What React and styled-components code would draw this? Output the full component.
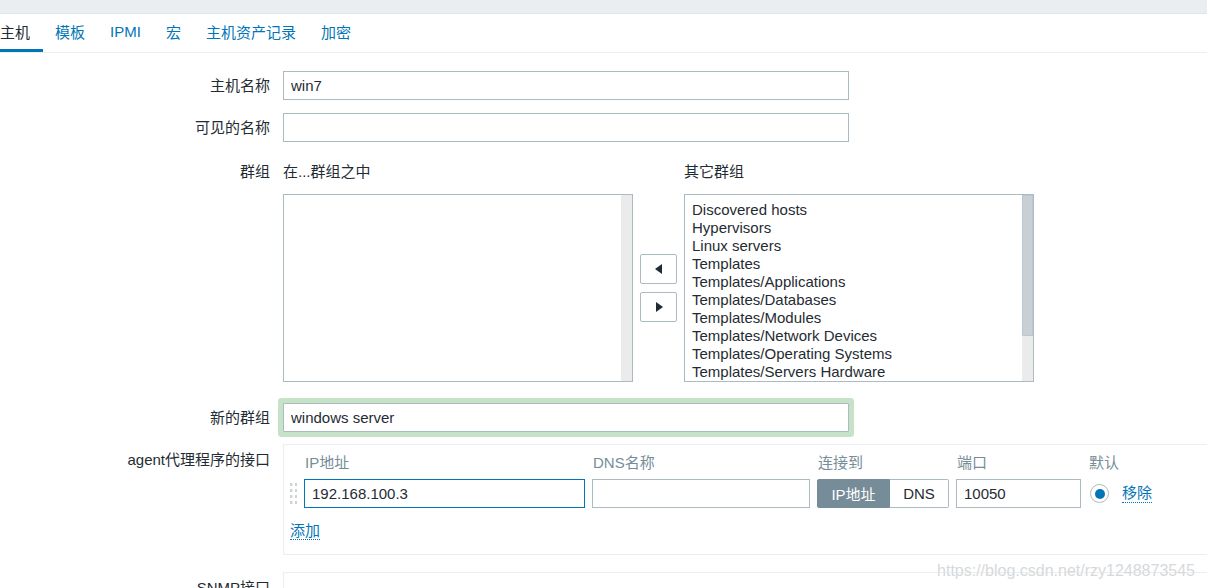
import React from "react";
import styled, { createGlobalStyle } from "styled-components";

const GlobalStyle = createGlobalStyle`
  html, body {
    margin: 0;
    padding: 0;
    overflow: hidden;
    background: #ffffff;
  }
  body {
    font-family: "Liberation Sans", Arial, "Noto Sans CJK SC", sans-serif;
    font-size: 15px;
    color: #1f2c33;
  }
`;

const tabs = ["主机", "模板", "IPMI", "宏", "主机资产记录", "加密"];

const otherGroups = [
  "Discovered hosts",
  "Hypervisors",
  "Linux servers",
  "Templates",
  "Templates/Applications",
  "Templates/Databases",
  "Templates/Modules",
  "Templates/Network Devices",
  "Templates/Operating Systems",
  "Templates/Servers Hardware",
];

function App() {
  return (
    <Page>
      <GlobalStyle />
      <TopBar />
      <TabBar>
        {tabs.map((t, i) => (
          <Tab key={t} active={i === 0}>
            {t}
          </Tab>
        ))}
      </TabBar>

      <Form>
        <Row>
          <Label>主机名称</Label>
          <Field>
            <TextInput wide defaultValue="win7" />
          </Field>
        </Row>
        <Row>
          <Label>可见的名称</Label>
          <Field>
            <TextInput wide defaultValue="" />
          </Field>
        </Row>
        <Row extraBottom={8}>
          <Label top={8}>群组</Label>
          <Field>
            <GroupGrid>
              <GroupHead>在...群组之中</GroupHead>
              <span />
              <GroupHead>其它群组</GroupHead>
              <Listbox>
                <ListItems />
                <Track />
              </Listbox>
              <MoveButtons>
                <MoveButton>
                  <Arrow viewBox="0 0 8 10">
                    <path d="M7 0 L7 10 L0 5 Z" />
                  </Arrow>
                </MoveButton>
                <MoveButton>
                  <Arrow viewBox="0 0 8 10">
                    <path d="M1 0 L1 10 L8 5 Z" />
                  </Arrow>
                </MoveButton>
              </MoveButtons>
              <Listbox>
                <ListItems>
                  {otherGroups.map((g) => (
                    <ListItem key={g}>{g}</ListItem>
                  ))}
                </ListItems>
                <Track>
                  <Thumb />
                </Track>
              </Listbox>
            </GroupGrid>
          </Field>
        </Row>
        <Row>
          <Label>新的群组</Label>
          <Field>
            <TextInput wide highlight defaultValue="windows server" />
          </Field>
        </Row>
        <Row extraBottom={4} pull={1}>
          <Label top={7}>agent代理程序的接口</Label>
          <Field>
            <InterfaceBox>
              <InterfaceGrid>
                <span />
                <ColHead>IP地址</ColHead>
                <ColHead>DNS名称</ColHead>
                <ColHead>连接到</ColHead>
                <ColHead>端口</ColHead>
                <ColHead>默认</ColHead>

                <Handle viewBox="0 0 7 24">
                  {[0, 1, 2, 3].map((r) =>
                    [0, 1].map((c) => (
                      <rect key={`${r}-${c}`} x={c * 5} y={1 + r * 6} width="2.4" height="3" />
                    ))
                  )}
                </Handle>
                <TextInput focused defaultValue="192.168.100.3" />
                <TextInput defaultValue="" />
                <Segmented>
                  <SegButton active>IP地址</SegButton>
                  <SegButton>DNS</SegButton>
                </Segmented>
                <TextInput defaultValue="10050" />
                <DefaultCell>
                  <Radio />
                  <DottedLink>移除</DottedLink>
                </DefaultCell>
              </InterfaceGrid>
              <AddRow>
                <DottedLink>添加</DottedLink>
              </AddRow>
            </InterfaceBox>
          </Field>
        </Row>
        <Row>
          <Label top={7}>SNMP接口</Label>
          <Field>
            <InterfaceBox tall />
          </Field>
        </Row>
      </Form>
      <Watermark>https://blog.csdn.net/rzy1248873545</Watermark>
    </Page>
  );
}

export default App;

const Page = styled.div`
  position: relative;
  width: 1207px;
  height: 588px;
  overflow: hidden;
`;

const TopBar = styled.div`
  height: 13px;
  background: #ebeef0;
  border-bottom: 1px solid #dfe4e7;
`;

const TabBar = styled.nav`
  display: flex;
  height: 38px;
  margin-left: -12.5px;
  border-bottom: 1px solid #ebeef0;
`;

const Tab = styled.div`
  display: flex;
  align-items: center;
  padding: 0 12.5px;
  color: ${(p) => (p.active ? "#1f2c33" : "#0275b8")};
  border-bottom: 3px solid ${(p) => (p.active ? "#0275b8" : "transparent")};
  white-space: nowrap;
`;

const Form = styled.div`
  display: flex;
  flex-direction: column;
  gap: 13px;
  padding-top: 18px;
`;

const Row = styled.div`
  display: flex;
  align-items: flex-start;
  margin-top: ${(p) => -(p.pull || 0)}px;
  padding-bottom: ${(p) => p.extraBottom || 0}px;
`;

const Label = styled.div`
  width: 270px;
  flex: none;
  text-align: right;
  line-height: 18px;
  padding-top: ${(p) => (p.top !== undefined ? p.top : 5.5)}px;
  white-space: nowrap;
`;

const Field = styled.div`
  margin-left: 13px;
  flex: 1;
`;

const TextInput = styled.input`
  box-sizing: border-box;
  width: ${(p) => (p.wide ? "566px" : "100%")};
  height: 29px;
  padding: 0 7px;
  font: inherit;
  color: #1f2c33;
  background: #ffffff;
  border: 1px solid ${(p) => (p.focused ? "#0275b8" : "#acbbc2")};
  border-radius: ${(p) => (p.highlight ? "1px" : "0")};
  outline: none;
  box-shadow: ${(p) => (p.highlight ? "0 0 0 5px #c6e2c7" : "none")};
`;

const GroupGrid = styled.div`
  display: grid;
  grid-template-columns: 350px 51px 350px;
  grid-template-rows: auto 188px;
  align-items: start;
`;

const GroupHead = styled.div`
  line-height: 18px;
  padding-top: 8px;
  margin-bottom: 13px;
  white-space: nowrap;
`;

const Listbox = styled.div`
  box-sizing: border-box;
  height: 188px;
  display: flex;
  border: 1px solid #acbbc2;
  overflow: hidden;
`;

const ListItems = styled.div`
  flex: 1;
  padding: 6px 7px 0;
  overflow: hidden;
`;

const ListItem = styled.div`
  line-height: 18px;
  white-space: nowrap;
`;

const Track = styled.div`
  width: 11px;
  flex: none;
  background: #ebebeb;
`;

const Thumb = styled.div`
  box-sizing: border-box;
  height: 141px;
  background: #c8d0d6;
  border: 1px solid #bdc7ce;
`;

const MoveButtons = styled.div`
  height: 188px;
  display: flex;
  flex-direction: column;
  justify-content: center;
  align-items: center;
  gap: 8px;
`;

const MoveButton = styled.div`
  box-sizing: border-box;
  width: 37px;
  height: 30px;
  display: flex;
  align-items: center;
  justify-content: center;
  border: 1px solid #acbbc2;
  border-radius: 2px;
  background: #ffffff;
`;

const Arrow = styled.svg`
  width: 8px;
  height: 10px;
  fill: #1f2c33;
`;

const InterfaceBox = styled.div`
  box-sizing: border-box;
  width: 1000px;
  height: ${(p) => (p.tall ? "120px" : "auto")};
  border: 1px solid #ebeef0;
  padding: 9px 6px 14px;
`;

const InterfaceGrid = styled.div`
  display: grid;
  grid-template-columns: 7px 281px 218px 132px 125px auto;
  column-gap: 7px;
  row-gap: 7px;
  align-items: center;
`;

const ColHead = styled.div`
  color: #768d99;
  line-height: 18px;
  padding-left: 1px;
  white-space: nowrap;
`;

const Handle = styled.svg`
  width: 7px;
  height: 24px;
  fill: #cdd4d8;
`;

const Segmented = styled.div`
  display: flex;
  height: 29px;
`;

const SegButton = styled.div`
  box-sizing: border-box;
  flex: ${(p) => (p.active ? "0 0 73px" : "1")};
  display: flex;
  align-items: center;
  justify-content: center;
  background: ${(p) => (p.active ? "#768d99" : "#ffffff")};
  color: ${(p) => (p.active ? "#ffffff" : "#1f2c33")};
  border: 1px solid ${(p) => (p.active ? "#768d99" : "#acbbc2")};
  border-left-width: ${(p) => (p.active ? "1px" : "0")};
  border-radius: ${(p) => (p.active ? "2px 0 0 2px" : "0 2px 2px 0")};
`;

const DefaultCell = styled.div`
  display: flex;
  align-items: center;
  gap: 13px;
  padding-left: 2px;
`;

const Radio = styled.span`
  box-sizing: border-box;
  width: 19px;
  height: 19px;
  border-radius: 50%;
  border: 1px solid #acbbc2;
  display: flex;
  align-items: center;
  justify-content: center;
  &::after {
    content: "";
    width: 10px;
    height: 10px;
    border-radius: 50%;
    background: #0275b8;
  }
`;

const DottedLink = styled.span`
  color: #0275b8;
  line-height: 18px;
  border-bottom: 1px dotted #0275b8;
  white-space: nowrap;
`;

const AddRow = styled.div`
  margin-top: 14px;
  line-height: 18px;
`;

const Watermark = styled.div`
  position: absolute;
  right: 12px;
  bottom: 8px;
  font-size: 16px;
  line-height: 18px;
  color: #d6d9db;
  text-shadow: 0 0 1px #ffffff;
  white-space: nowrap;
`;
